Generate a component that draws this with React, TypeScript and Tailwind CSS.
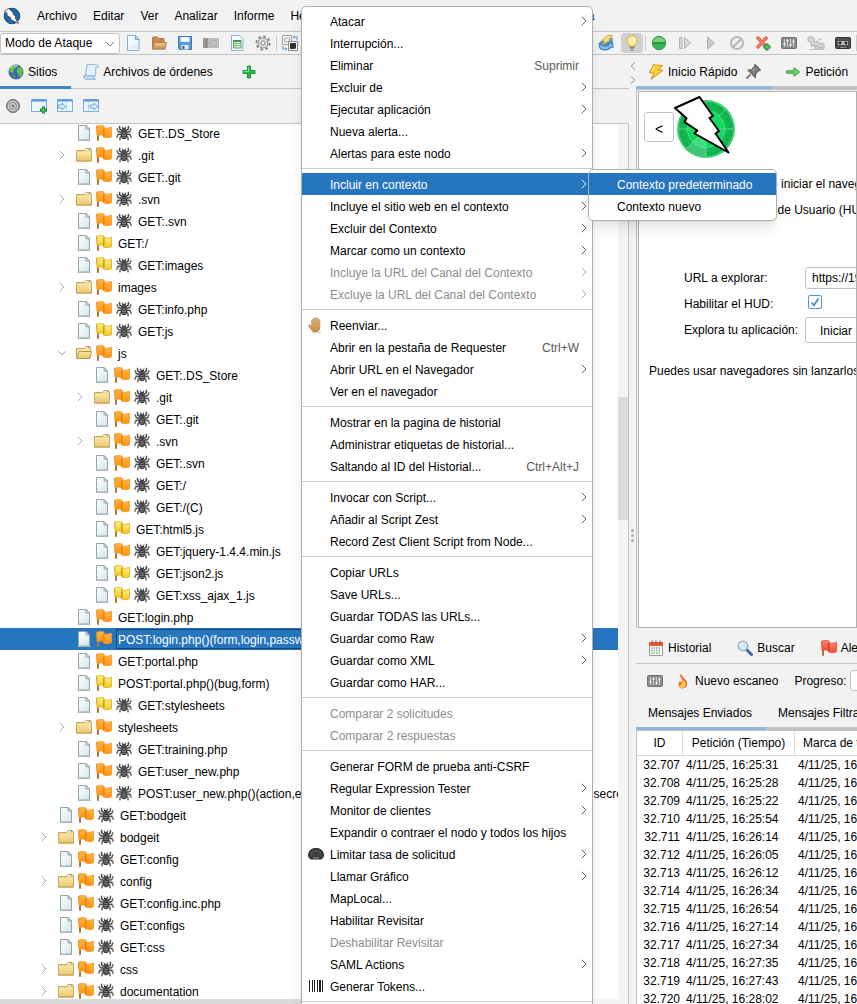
import type { ReactNode } from "react";
import { ChevronDown, ChevronLeft, ChevronRight } from "lucide-react";

const Icon = ({ children, w = 16, h = 16 }: { children: ReactNode; w?: number; h?: number }) => (
  <svg width={w} height={h} viewBox={`0 0 ${w} ${h}`} className="shrink-0" fill="none" aria-hidden="true">
    {children}
  </svg>
);

const Gradients = () => (
  <svg width="0" height="0" className="absolute" aria-hidden="true">
    <defs>
      <linearGradient id="paper" x1="0" y1="0" x2="1" y2="1">
        <stop offset="0" stopColor="#ffffff" />
        <stop offset="1" stopColor="#d3e6ea" />
      </linearGradient>
      <linearGradient id="gold" x1="0" y1="0" x2="0" y2="1">
        <stop offset="0" stopColor="#fbe7a8" />
        <stop offset="1" stopColor="#e6c46e" />
      </linearGradient>
      <linearGradient id="orange" x1="0" y1="0" x2="0" y2="1">
        <stop offset="0" stopColor="#ffb347" />
        <stop offset="1" stopColor="#ff9410" />
      </linearGradient>
      <linearGradient id="yellow" x1="0" y1="0" x2="0" y2="1">
        <stop offset="0" stopColor="#fff08a" />
        <stop offset="1" stopColor="#f2c81e" />
      </linearGradient>
      <linearGradient id="red" x1="0" y1="0" x2="0" y2="1">
        <stop offset="0" stopColor="#ff8570" />
        <stop offset="1" stopColor="#ee4f38" />
      </linearGradient>
      <linearGradient id="wood" x1="0" y1="0" x2="0" y2="1">
        <stop offset="0" stopColor="#f2cb97" />
        <stop offset="1" stopColor="#cc8b45" />
      </linearGradient>
      <radialGradient id="radar">
        <stop offset="0" stopColor="#0ee763" />
        <stop offset="0.65" stopColor="#0fd95d" />
        <stop offset="0.7" stopColor="#12bd54" />
        <stop offset="1" stopColor="#13ad4e" />
      </radialGradient>
    </defs>
  </svg>
);

const PageIcon = () => (
  <Icon>
    <path d="M1.500 15.500h13" stroke="#c3ccce" />
    <path d="M2.500.5h7.500l3.500 3.500v11h-11z" fill="url(#paper)" stroke="#8ea6ac" />
    <path d="M10 .5V4h3.500z" fill="#dfeaec" stroke="#7f979e" strokeWidth=".8" />
  </Icon>
);

const FolderIcon = () => (
  <Icon>
    <path d="M.5 3.500h8l1.500-2h4.500l1 1.500v11h-15z" fill="#f3d98d" stroke="#c9a55a" />
    <path d="M10.500 2.700h3.500" stroke="#fff" />
    <path d="M12.500 2.700h1.500" stroke="#3aa0dd" />
    <path d="M1 5h14v9H1z" fill="url(#gold)" />
    <path d="M.5 14h15" stroke="#bf9748" />
  </Icon>
);

const OpenFolderIcon = () => (
  <Icon>
    <path d="M.5 3.500h8l1.500-2h4l.5 1.500v9H.5z" fill="#f8e3a4" stroke="#c9a55a" />
    <path d="M12 2.700h1.500" stroke="#3aa0dd" />
    <path d="M3 6.500h12.500l-1.500 7H.7z" fill="url(#gold)" stroke="#bf9748" />
  </Icon>
);

const flags = {
  orange: { fill: "url(#orange)", edge: "#f7961c", fold: "#e57a06" },
  yellow: { fill: "url(#yellow)", edge: "#d9ae14", fold: "#c09508" },
  red: { fill: "url(#red)", edge: "#e2503b", fold: "#b93222" },
};

type FlagColor = keyof typeof flags;

const FlagIcon = ({ color }: { color: FlagColor }) => (
  <Icon>
    <path d="M1 1.500l1 8v6.300" stroke="#b0753c" strokeWidth="2" />
    <path d="M.8 1q4-1.200 7.200 0v9.500q-3.500-1.200-7 0z" fill={flags[color].fill} stroke={flags[color].edge} strokeWidth=".8" />
    <path d="M7.500 3q4 1 8-.8v9.600q-4 1.800-8 .2z" fill={flags[color].fill} stroke={flags[color].edge} strokeWidth=".8" />
    <path d="M7.300 3.500L8.500 2v8.500L7.300 12z" fill={flags[color].fold} />
  </Icon>
);

const SpiderIcon = () => (
  <Icon>
    <g stroke="#6f6f6f" strokeWidth="1.600">
      <path d="M6 5.500L3.700 4 3.500.8M10 5.500L12.300 4l.2-3.200" />
      <path d="M6 7L2.200 6.500.9 3.200M10 7l3.800-.5 1.300-3.300" />
      <path d="M6 9l-4 .3-1.300 3.400M10 9l4 .3 1.300 3.400" />
      <path d="M6 10.500l-1.800 1.700-.4 3.200M10 10.500l1.800 1.700.4 3.200" />
    </g>
    <g stroke="#333" strokeWidth=".7">
      <path d="M6 5.500L3.700 4 3.500 1.500M10 5.500L12.300 4l.2-2.500" />
      <path d="M6 7.500l-4-.8M10 7.500l4-.8M6 9.500l-4 .3M10 9.500l4 .3" />
    </g>
    <path d="M6.500 4L6.200 1.500M9.500 4l.3-2.500" stroke="#555" />
    <ellipse cx="8" cy="4.800" rx="2.300" ry="2.200" fill="#4a4a4a" />
    <ellipse cx="8" cy="10" rx="3.300" ry="4.200" fill="#444" />
    <path d="M6.500 8.500h3M6 10.500h4M6.700 12.300h2.600" stroke="#8b8b8b" strokeWidth=".8" />
  </Icon>
);

const GlobeIcon = () => (
  <Icon>
    <circle cx="8" cy="8" r="7" fill="#3f63bb" stroke="#35509a" />
    <path d="M2 4q3-3.500 7-2.800L8 4 5.500 5.500 6 8 3.500 9 1.500 7zM10 3.500l3-.5 2 4-1.500 5-2.500 1-1-3.500L8.500 8z" fill="#62c043" />
    <path d="M4.500 10.500l3 .8-.5 3-2-1z" fill="#4aa834" />
    <path d="M3 4q3-3 7-2" stroke="#d5f1bd" strokeWidth=".8" />
  </Icon>
);

const ScriptIcon = () => (
  <Icon>
    <path d="M4 .7h9.500q2 0 2 2.500h-2.800v8.600H2.500z" fill="#eef6fd" stroke="#7fb0de" />
    <path d="M.5 12h10q0 2.500 2 3.200H3Q.8 15 .5 12z" fill="#cfe4f6" stroke="#7fb0de" />
    <path d="M5 4h5.500M4.700 6.500h5.500M4.400 9h5.500" stroke="#d5e6f5" />
  </Icon>
);

const PlusIcon = () => (
  <Icon>
    <path d="M6.500 2h3v4.500H14v3H9.500V14h-3V9.500H2v-3h4.500z" fill="#2db54a" stroke="#1c9438" />
    <path d="M7.500 3v4.500H3" stroke="#7fda8d" />
  </Icon>
);

const NewFileIcon = () => (
  <Icon>
    <path d="M2.500.5h8l3.500 4v11H2.500z" fill="#f2f9ff" stroke="#7fb0da" />
    <path d="M10.500.5v4H14z" fill="#cfe5f7" stroke="#6ba5d6" />
    <path d="M4 13l8.500-5v6H4z" fill="#dcedfb" />
  </Icon>
);

const OpenIcon = () => (
  <Icon>
    <path d="M1.500 13V3q0-1 1-1h4l1.500 1.500h5V8" fill="#c98a48" stroke="#ad7a45" />
    <path d="M3.500 7.500h12l-1.500 6.700H1.200z" fill="url(#wood)" stroke="#b78350" />
  </Icon>
);

const SaveIcon = () => (
  <Icon>
    <path d="M1.500 1.500h13v13h-12l-1-1z" fill="#5b9bd5" stroke="#3a7ab6" />
    <path d="M3.500 2h9v5h-9z" fill="#f2f8fd" />
    <path d="M4.500 10h7v4.500h-7z" fill="#e4eaf0" />
    <path d="M5.500 11h2v3h-2z" fill="#2e5e8f" />
  </Icon>
);

const CameraIcon = () => (
  <Icon>
    <path d="M0 3h16v10H0z" fill="#bcbcbc" />
    <path d="M0 3h5v10H0z" fill="#979797" />
    <path d="M2 5h2M2 7h2M2 9h2M2 11h2" stroke="#808080" />
    <circle cx="10.500" cy="8" r="2.800" fill="#d3d3d3" stroke="#a4a4a4" />
    <circle cx="10.500" cy="8" r="1" fill="#a4a4a4" />
  </Icon>
);

const SheetIcon = () => (
  <Icon>
    <path d="M2.500.5h8l3.500 3.500v11.500H2.500z" fill="#f4faff" stroke="#8bb4d4" />
    <path d="M4.500 5.500h7.500v7.500H4.500z" fill="#e6f6e4" stroke="#4aa850" />
    <path d="M4.500 6h7.500" stroke="#2f8f38" strokeWidth="1.600" />
    <path d="M4.500 8.500h7.500M4.500 10.500h7.500M7 6v7" stroke="#5cb061" strokeWidth=".7" />
  </Icon>
);

const GearIcon = () => (
  <Icon>
    <circle cx="8" cy="8" r="6.600" stroke="#868686" strokeWidth="2" strokeDasharray="2.600 2.580" />
    <circle cx="8" cy="8" r="5" fill="#e3e3e3" stroke="#868686" />
    <circle cx="8" cy="8" r="2.200" fill="#f2f2f2" stroke="#808080" />
  </Icon>
);

const SwapIcon = () => (
  <Icon>
    <path d="M.5.5h9v9h-9z" fill="#fff" stroke="#999" />
    <path d="M2.500 3h5v4h-5z" fill="#eee" stroke="#aaa" />
    <path d="M6.500 6.500h9v9h-9z" fill="#fff" stroke="#888" />
    <path d="M8 8h6v5l-1 1H8z" fill="#333" />
    <path d="M11 2h4v3M11 2l1.500-1.500M11 2l1.500 1.500M1 11v3h4M5 14l-1.500-1.500M5 14l-1.500 1.500" stroke="#5d86dc" />
  </Icon>
);

const RefreshBoltIcon = () => (
  <Icon>
    <path d="M1 8v5q3 3 7 2.500 6-1 7-6L14.500 3 9 1z" fill="#4d90d4" />
    <path d="M1 8l2 2q4 2.500 8 0l-1.500-1.500H15V13l-1.500-1.200Q9 16 4 14.500L1 12z" fill="#86baec" stroke="#2a69ab" strokeWidth=".7" />
    <path d="M9 .5h5.500l-3.500 4h2.500L4 10l2.500-4H3.500z" fill="#fcdf74" stroke="#c59c30" strokeWidth=".8" />
  </Icon>
);

const BulbIcon = () => (
  <Icon>
    <path d="M8 .7a4.800 4.800 0 0 1 2.500 9v1.500h-5V9.700A4.800 4.800 0 0 1 8 .7z" fill="#ffef9c" stroke="#e2ac30" />
    <path d="M8 2.500a2.500 2.500 0 0 1 2 4" stroke="#fff" strokeWidth="1.500" />
    <path d="M5.500 12.300h5M6 14h4M7 15.500h2" stroke="#7c7c7c" strokeWidth="1.200" />
  </Icon>
);

const GreenBallIcon = () => (
  <Icon>
    <circle cx="8" cy="8" r="6.700" fill="#38b54e" stroke="#2c9a40" />
    <path d="M2 7a6.200 6.200 0 0 1 12 0z" fill="#79cf80" />
    <path d="M1.500 8h13" stroke="#1c8031" />
  </Icon>
);

const StepIcon = () => (
  <Icon>
    <path d="M2.500 2.500H5v11H2.500zM7.500 2.500L13.500 8l-6 5.500z" fill="#d8d8d8" stroke="#b2b2b2" />
  </Icon>
);

const PlayIcon = () => (
  <Icon>
    <path d="M4.500 2L11.500 8l-7 6z" fill="#cccccc" stroke="#ababab" />
  </Icon>
);

const BanIcon = () => (
  <Icon>
    <circle cx="8" cy="8" r="6" stroke="#b8b8b8" strokeWidth="2" />
    <path d="M4 12l8-8" stroke="#b8b8b8" strokeWidth="2" />
  </Icon>
);

const CrossPlusIcon = () => (
  <Icon>
    <path d="M2 2l10 11M12 2L2 13" stroke="#d5442c" strokeWidth="3.200" />
    <path d="M2 2l10 11M12 2L2 13" stroke="#f88770" strokeWidth="1.600" />
    <path d="M12 8.500v7M8.500 12h7" stroke="#178a32" strokeWidth="3" />
    <path d="M12 9.500v5M9.500 12h5" stroke="#6ddb79" />
  </Icon>
);

const SlidersIcon = () => (
  <Icon>
    <rect x=".5" y="2.500" width="15" height="11" rx="1" fill="#8a8a8a" stroke="#707070" />
    <path d="M3.500 4v8M6.500 4v8M9.500 4v8M12.500 4v8" stroke="#cfcfcf" />
    <path d="M2.500 9h2M5.500 6h2M8.500 10h2M11.500 6.500h2" stroke="#fff" strokeWidth="1.500" />
  </Icon>
);

const BrokenPlugIcon = () => (
  <Icon w={18}>
    <path d="M1 2.500l3-1 3 1.500v3l6 2 4 1v5H8v-3H4V7L1 6z" fill="#d3d3d3" stroke="#b4b4b4" />
    <path d="M10 5.500l5-2M6 10.500h5M11 12.500h5" stroke="#b4b4b4" />
    <path d="M2 14.500h15" stroke="#c4c4c4" />
  </Icon>
);

const TapeIcon = () => (
  <Icon>
    <rect x=".5" y="2.500" width="15" height="11" rx="1" fill="#4d4d4d" stroke="#333" />
    <rect x="3" y="6" width="10" height="4" fill="#b8b8b8" />
    <circle cx="5" cy="8" r="1.400" fill="#222" />
    <circle cx="11" cy="8" r="1.400" fill="#222" />
    <path d="M5 12.500h6" stroke="#888" />
  </Icon>
);

const TargetIcon = () => (
  <Icon>
    <circle cx="8" cy="8" r="6.500" fill="#9a9a9a" stroke="#6c6c6c" />
    <circle cx="8" cy="8" r="4.700" stroke="#dcdcdc" />
    <circle cx="8" cy="8" r="2.300" fill="#888" stroke="#e6e6e6" />
  </Icon>
);

const WindowIcon = ({ kind }: { kind: "add" | "in" | "out" }) => (
  <Icon>
    <path d="M.5 1.500h15v12H.5z" fill="#eef6fd" stroke="#78aee0" />
    <path d="M.5 2.500h15" stroke="#5598dc" strokeWidth="2" />
    {kind === "add" && (
      <>
        <path d="M12.500 8.500v7M9 12h7" stroke="#178a32" strokeWidth="3" />
        <path d="M12.500 9.500v5M10 12h5" stroke="#62d572" />
      </>
    )}
    {kind === "in" && (
      <>
        <path d="M9.500 4v9" stroke="#b5d2ee" />
        <path d="M1 7h4V5l4 3.500L5 12v-2H1z" fill="#dcecfa" stroke="#5290cd" strokeWidth=".8" />
      </>
    )}
    {kind === "out" && (
      <>
        <path d="M5.500 4v9" stroke="#b5d2ee" />
        <path d="M7 7h4V5l4 3.500-4 3.500v-2H7z" fill="#dcecfa" stroke="#5290cd" strokeWidth=".8" />
      </>
    )}
  </Icon>
);

const BoltIcon = () => (
  <Icon>
    <path d="M5.500.8L14.500 1.500 10 5.800l5 .5L3 15.300l3-6L1.500 8.500z" fill="#ffce3d" stroke="#d39312" />
    <path d="M6.500 2L3.500 8" stroke="#fff1b5" />
  </Icon>
);

const PinIcon = () => (
  <Icon>
    <path d="M10 .8L15.200 6l-2 .8-2.600 2.700-.4 3.500L3.500 6.200 7 5.800 9.400 3z" fill="#808080" stroke="#666" strokeWidth="1.500" />
    <path d="M5.500 10.500l-4 4" stroke="#777" strokeWidth="2" />
    <path d="M9.500 4.500L7.500 7" stroke="#ccc" />
  </Icon>
);

const ArrowIcon = () => (
  <Icon>
    <path d="M1.500 6.800h7.500V3.800l5.500 4.200-5.500 4.200V9.200H1.500z" fill="#6bd869" stroke="#2f9c39" />
  </Icon>
);

const CalendarIcon = () => (
  <Icon>
    <path d="M1.500 2.500h13v13h-13z" fill="#fff" stroke="#9a9a9a" />
    <path d="M1 2h14v4H1z" fill="#e4553c" />
    <path d="M4 .5v3M8 .5v3M12 .5v3" stroke="#666" />
    <path d="M3 8h10M3 10.500h10M3 13h10" stroke="#7ab583" strokeWidth="1.500" strokeDasharray="1.500 1" />
  </Icon>
);

const SearchIcon = () => (
  <Icon>
    <path d="M9.500 9.500l5 5" stroke="#3a6bb0" strokeWidth="3" strokeLinecap="round" />
    <circle cx="6" cy="6" r="4.800" fill="#cfe8fa" stroke="#9aaab6" strokeWidth="1.300" />
    <path d="M3.500 6A2.500 2.500 0 0 1 6 3.500" stroke="#fff" strokeWidth="1.200" />
  </Icon>
);

const FlameIcon = () => (
  <Icon>
    <path d="M6 .5q.5 3 3.500 5.200Q13 9 11.800 12.500 10.500 15.500 7.500 15.500 4 15.300 3.500 11.500q0-2 1.500-3.500.5 1.500 1.500 1.500Q8 6 5 3z" fill="#f0641f" />
    <path d="M8 6q3 3 2.600 6-.8 3-3.400 3-2.700-.2-2.700-2.700Q7.500 12 8 6z" fill="#ffcc4a" />
  </Icon>
);

const HandIcon = () => (
  <Icon>
    <path d="M4 15.500h9" stroke="#ccc" />
    <path d="M5 14.500Q1.500 11 .8 8q1.500-.8 3 1.500V3q1-1.200 2 0V1.500q1-1.300 2 0V1q1-1 2 .3V3q1-1.200 2 0v7q0 3-2 4.500z" fill="url(#wood)" stroke="#b5824c" strokeWidth=".8" />
    <path d="M5.800 3v5M7.800 2v6M9.900 3v5M5 11q3-2 5-.5" stroke="#b5824c" strokeWidth=".7" />
  </Icon>
);

const GaugeIcon = () => (
  <Icon>
    <path d="M.5 9Q1 2.500 8 2.500T15.500 9q0 2.500-2 4h-11Q.5 11.500.5 9z" fill="#3d3d3d" stroke="#222" />
    <path d="M3 9q.5-4 5-4t5 4" stroke="#888" strokeDasharray="1 1.300" />
    <path d="M5 12h6" stroke="#999" />
  </Icon>
);

const BarcodeIcon = () => (
  <Icon>
    <path d="M1.500 2v12M4.500 2v12M6.500 2v12M9.500 2v12M14.500 2v12" stroke="#222" />
    <path d="M12 2v12" stroke="#222" strokeWidth="2" />
  </Icon>
);

const AppLogo = () => (
  <Icon w={18} h={18}>
    <circle cx="9" cy="9" r="7.800" fill="#2467a6" stroke="#174b7d" />
    <path d="M1.500 4L5.500 1.500l5 4.500-.8.800 3.300 3-1 .8 3.500 6L7 12l1-1-4.500-3 1-1z" fill="#fff" stroke="#27313b" strokeWidth=".7" />
  </Icon>
);

const RadarLogo = () => (
  <Icon w={62} h={62}>
    <circle cx="32" cy="33" r="29" fill="#3fce74" />
    <circle cx="32" cy="33" r="27" fill="url(#radar)" />
    <circle cx="32" cy="33" r="18.500" stroke="#4fe38b" />
    <path d="M32 5v56M4 33h56M12.500 52.500L32 33M51.500 13.500L32 33M51.500 52.500L32 33" stroke="#48dd83" />
    <path d="M32 33L13 52q8 8 19 8z" fill="#98e7b8" opacity=".35" />
    <path d="M1 12L25.500 1 39 20l-3.500 2L45 35l-3.500 2.500L54.500 56.500 20.500 37.500l2.800-3L10.500 26l2-3.800z" fill="#fff" stroke="#000" strokeWidth="2" strokeLinejoin="round" />
  </Icon>
);

const menuBar = ["Archivo", "Editar", "Ver", "Analizar", "Informe", "Herramientas", "Importar", "Exportar", "En línea", "Ayuda"];

const ToolButton = ({ label, children, active, wide }: { label: string; children: ReactNode; active?: boolean; wide?: boolean }) => (
  <button aria-label={label} className={`flex h-[21px] items-center justify-center ${wide ? "w-7" : "w-[26px]"}`}>
    <span className={`flex h-5 items-center justify-center rounded-sm ${active ? "w-[22px] bg-[#d0d0d0]" : ""}`}>{children}</span>
  </button>
);

const Divider = () => <span className="h-4 w-px bg-[#cdcdcd]" />;

const TopToolbar = () => (
  <div className="flex h-[23px] shrink-0 items-center border-b border-[#c2c2c2]">
    <div className="relative">
      <select
        aria-label="Modo"
        className="block h-[21px] w-[120px] appearance-none rounded-[3px] border border-[#c2c2c2] bg-white pl-1"
        defaultValue="Modo de Ataque"
      >
        <option>Modo de Ataque</option>
        <option>Modo Seguro</option>
      </select>
      <ChevronDown className="pointer-events-none absolute top-[3px] right-0.5 size-4 text-[#777]" strokeWidth={1.5} />
    </div>
    <ToolButton label="Nueva sesión"><NewFileIcon /></ToolButton>
    <ToolButton label="Abrir sesión"><OpenIcon /></ToolButton>
    <ToolButton label="Guardar sesión"><SaveIcon /></ToolButton>
    <ToolButton label="Instantánea"><CameraIcon /></ToolButton>
    <ToolButton label="Propiedades"><SheetIcon /></ToolButton>
    <ToolButton label="Opciones"><GearIcon /></ToolButton>
    <Divider />
    <ToolButton label="Mostrar pestañas"><SwapIcon /></ToolButton>
    <div className="flex-1" />
    <ToolButton label="Actualizar"><RefreshBoltIcon /></ToolButton>
    <ToolButton label="HUD" active><BulbIcon /></ToolButton>
    <Divider />
    <ToolButton label="Interrumpir"><GreenBallIcon /></ToolButton>
    <ToolButton label="Paso"><StepIcon /></ToolButton>
    <ToolButton label="Continuar"><PlayIcon /></ToolButton>
    <ToolButton label="Descartar"><BanIcon /></ToolButton>
    <ToolButton label="Agregar interrupción"><CrossPlusIcon /></ToolButton>
    <ToolButton label="Políticas"><SlidersIcon /></ToolButton>
    <ToolButton label="Proxy" wide><BrokenPlugIcon /></ToolButton>
    <ToolButton label="Grabar"><TapeIcon /></ToolButton>
    <Divider />
  </div>
);

type Row = { text: string; level?: 1 | 3; folder?: "open" | "closed"; flag?: FlagColor; plain?: boolean; selected?: boolean };

const rows: Row[] = [
  { text: "GET:.DS_Store" },
  { text: ".git", folder: "closed" },
  { text: "GET:.git" },
  { text: ".svn", folder: "closed" },
  { text: "GET:.svn" },
  { text: "GET:/", flag: "yellow", plain: true },
  { text: "GET:images", flag: "yellow" },
  { text: "images", folder: "closed", plain: true },
  { text: "GET:info.php" },
  { text: "GET:js", flag: "yellow" },
  { text: "js", folder: "open", plain: true },
  { text: "GET:.DS_Store", level: 3 },
  { text: ".git", level: 3, folder: "closed" },
  { text: "GET:.git", level: 3 },
  { text: ".svn", level: 3, folder: "closed" },
  { text: "GET:.svn", level: 3 },
  { text: "GET:/", level: 3 },
  { text: "GET:/(C)", level: 3 },
  { text: "GET:html5.js", level: 3, flag: "yellow", plain: true },
  { text: "GET:jquery-1.4.4.min.js", level: 3 },
  { text: "GET:json2.js", level: 3, flag: "yellow" },
  { text: "GET:xss_ajax_1.js", level: 3, flag: "yellow" },
  { text: "GET:login.php", plain: true },
  { text: "POST:login.php()(form,login,password,security_level)", plain: true, selected: true },
  { text: "GET:portal.php", plain: true },
  { text: "POST:portal.php()(bug,form)", flag: "yellow", plain: true },
  { text: "GET:stylesheets", flag: "yellow" },
  { text: "stylesheets", folder: "closed", plain: true },
  { text: "GET:training.php" },
  { text: "GET:user_new.php" },
  { text: "POST:user_new.php()(action,email,login,mail_activation,password,password_confirm,secret)" },
  { text: "GET:bodgeit", level: 1 },
  { text: "bodgeit", level: 1, folder: "closed" },
  { text: "GET:config", level: 1 },
  { text: "config", level: 1, folder: "closed" },
  { text: "GET:config.inc.php", level: 1 },
  { text: "GET:configs", level: 1 },
  { text: "GET:css", level: 1 },
  { text: "css", level: 1, folder: "closed" },
  { text: "documentation", level: 1, folder: "closed" },
];

const indent = { 1: "pl-[36px]", 2: "pl-[54px]", 3: "pl-[72px]" };

const TreeRow = ({ row }: { row: Row }) => (
  <li
    className={`flex h-[22px] items-center gap-1 whitespace-nowrap ${indent[row.level ?? 2]} ${
      row.selected ? "bg-[#2675bf] text-white" : ""
    }`}
  >
    <span className="mr-0.5 flex w-4 shrink-0 justify-center text-[#aaa]">
      {row.folder === "closed" && <ChevronRight className="size-4" strokeWidth={1.5} />}
      {row.folder === "open" && <ChevronDown className="size-4" strokeWidth={1.5} />}
    </span>
    {!row.folder && <PageIcon />}
    {row.folder === "closed" && <FolderIcon />}
    {row.folder === "open" && <OpenFolderIcon />}
    <FlagIcon color={row.flag ?? "orange"} />
    {!row.plain && <SpiderIcon />}
    <span className={`border px-px pt-0.5 leading-4 ${row.selected ? "border-[#174a7c]" : "border-transparent"}`}>{row.text}</span>
  </li>
);

const SitesPanel = () => (
  <section className="flex min-h-0 flex-col overflow-hidden">
    <div className="flex h-[34px] shrink-0 border-b border-[#c2c2c2]">
      <button className="-mb-px flex items-center gap-1 border-b-[3px] border-[#4083c9] pt-0.5 pr-3.5 pl-2"><GlobeIcon />Sitios</button>
      <button className="flex items-center gap-1 px-3"><ScriptIcon />Archivos de órdenes</button>
      <button aria-label="Agregar pestaña" className="flex items-center px-4"><PlusIcon /></button>
    </div>
    <div className="flex h-[34px] shrink-0 items-center">
      <ToolButton label="Solo en alcance"><TargetIcon /></ToolButton>
      <ToolButton label="Nuevo contexto"><WindowIcon kind="add" /></ToolButton>
      <ToolButton label="Importar contexto"><WindowIcon kind="in" /></ToolButton>
      <ToolButton label="Exportar contexto"><WindowIcon kind="out" /></ToolButton>
    </div>
    <div className="flex min-h-0 flex-1 border-t border-r border-[#c2c2c2]">
      <div className="flex min-w-0 flex-1 flex-col">
        <div className="min-h-0 flex-1 overflow-hidden bg-white">
          <ul className="-mt-0.5">
            {rows.map((row, i) => (
              <TreeRow key={i} row={row} />
            ))}
          </ul>
        </div>
        <div className="h-[5px] shrink-0 bg-[#f5f5f5]">
          <div className="h-full w-4/5 bg-[#dbdbdb]" />
        </div>
      </div>
      <div className="w-2.5 bg-[#f5f5f5] pt-[273px]">
        <div className="h-[123px] bg-[#dbdbdb]" />
      </div>
    </div>
  </section>
);

const Splitter = () => (
  <div className="flex flex-col items-center text-[#777]">
    <div className="flex flex-col pt-1">
      <ChevronLeft className="h-3.5 w-4" strokeWidth={1.5} />
      <ChevronRight className="h-3.5 w-4" strokeWidth={1.5} />
    </div>
    <div className="flex flex-1 flex-col items-center justify-center gap-0.5 pb-5">
      <span className="size-[3px] rounded-full bg-[#aaa]" />
      <span className="size-[3px] rounded-full bg-[#aaa]" />
      <span className="size-[3px] rounded-full bg-[#aaa]" />
    </div>
  </div>
);

const QuickStart = () => (
  <section className="flex h-[573px] shrink-0 flex-col">
    <div className="flex h-[34px] shrink-0 border-b-[3px] border-[#c2c2c2] whitespace-nowrap">
      <button className="-mb-[3px] flex items-center gap-1 border-b-[3px] border-[#90b8de] pt-0.5 pr-3 pl-3">
        <BoltIcon />
        Inicio Rápido
        <span className="ml-1"><PinIcon /></span>
      </button>
      <button className="flex items-center gap-1 px-3 pt-0.5"><ArrowIcon />Petición</button>
    </div>
    <div className="min-h-0 flex-1 border-t border-l border-[#c2c2c2] pt-px pl-px">
      <div className="h-full overflow-hidden border border-[#b0b0b0] bg-white pt-1 pl-[5px] whitespace-nowrap">
        <div className="flex items-center">
          <button className="h-[30px] w-[30px] rounded-[3px] border border-[#c2c2c2] bg-white pt-1 text-sm">&lt;</button>
          <RadarLogo />
        </div>
        <div className="pl-[5px] leading-[26px]">
          <p className="mt-[13px]">Esta pantalla, le permite iniciar el navegador que elija</p>
          <p>Interfaz Frontal del Test de Usuario (HUD)</p>
          <div className="mt-[42px] grid grid-cols-[121px_1fr] pl-[35px]">
            <label htmlFor="url">URL a explorar:</label>
            <div className="flex items-center">
              <input id="url" defaultValue="https://192.168.1.10" className="h-[22px] w-64 rounded-[3px] border border-[#c2c2c2] bg-white px-1.5" />
            </div>
            <label htmlFor="hud">Habilitar el HUD:</label>
            <div className="relative flex items-center pb-1 pl-[3px]">
              <input id="hud" type="checkbox" defaultChecked className="peer size-3.5 appearance-none rounded-xs border border-[#4d94d8] bg-white" />
              <svg width="14" height="14" viewBox="0 0 14 14" className="pointer-events-none absolute hidden peer-checked:block" fill="none">
                <path d="M3.500 7.500l2.500 2.800L10.500 3.500" stroke="#3e8fdb" strokeWidth="1.800" />
              </svg>
            </div>
            <span>Explora tu aplicación:</span>
            <div className="flex">
              <button className="h-[26px] rounded-[3px] border border-[#c2c2c2] bg-white px-3.5">Iniciar Navegador</button>
            </div>
          </div>
          <p className="mt-[15px]">Puedes usar navegadores sin lanzarlos desde aquí</p>
        </div>
      </div>
    </div>
  </section>
);

const messages = [
  ["32.707", "16:25:31"], ["32.708", "16:25:28"], ["32.709", "16:25:22"], ["32.710", "16:25:54"],
  ["32.711", "16:26:14"], ["32.712", "16:26:05"], ["32.713", "16:26:12"], ["32.714", "16:26:34"],
  ["32.715", "16:26:54"], ["32.716", "16:27:14"], ["32.717", "16:27:34"], ["32.718", "16:27:35"],
  ["32.719", "16:27:43"], ["32.720", "16:28:02"],
];

const History = () => (
  <section className="flex min-h-0 flex-1 flex-col overflow-hidden whitespace-nowrap">
    <div className="flex h-9 shrink-0 items-center gap-[26px] border-b border-[#c2c2c2] pt-1 pl-3">
      <button className="flex items-center gap-1"><CalendarIcon />Historial</button>
      <button className="flex items-center gap-1"><SearchIcon />Buscar</button>
      <button className="flex items-center gap-1"><FlagIcon color="red" />Alertas</button>
    </div>
    <div className="flex h-[33px] shrink-0 items-center">
      <button aria-label="Políticas de escaneo" className="ml-[11px]"><SlidersIcon /></button>
      <button className="ml-3 flex items-center gap-1"><FlameIcon />Nuevo escaneo</button>
      <label htmlFor="progress" className="ml-4">Progreso:</label>
      <select id="progress" className="ml-1 h-[21px] w-40 shrink-0 appearance-none rounded-[3px] border border-[#c2c2c2] bg-white" />
    </div>
    <div className="flex h-[33px] shrink-0 border-b-[3px] border-[#c2c2c2]">
      <button className="-mb-[3px] shrink-0 border-b-[3px] border-[#90b8de] px-3.5 pt-0.5 pl-3">Mensajes Enviados</button>
      <button className="shrink-0 px-3 pt-0.5">Mensajes Filtrados</button>
    </div>
    <div className="flex-1 overflow-hidden border-t border-l border-[#c2c2c2] bg-white">
      <table className="w-[300px] table-fixed border-separate border-spacing-0">
        <thead>
          <tr className="h-[25px]">
            <th className="w-[46px] border-r border-b border-[#dcdcdc] p-0 font-normal">ID</th>
            <th className="w-[112px] border-r border-b border-[#dcdcdc] p-0 font-normal">Petición (Tiempo)</th>
            <th className="border-b border-[#dcdcdc] p-0 pl-2 text-left font-normal">Marca de tiempo</th>
          </tr>
        </thead>
        <tbody>
          {messages.map(([id, time]) => (
            <tr key={id} className="h-[18px] leading-[18px]">
              <td className="p-0 pr-[3px] text-right">{id}</td>
              <td className="p-0 pl-[3px]">4/11/25, {time}</td>
              <td className="p-0 pl-[3px]">4/11/25, {time}</td>
            </tr>
          ))}
        </tbody>
      </table>
    </div>
  </section>
);

type Item = { text: string; sub?: boolean; keys?: string; icon?: ReactNode; disabled?: boolean; active?: boolean };

const menuGroups: Item[][] = [
  [
    { text: "Atacar", sub: true },
    { text: "Interrupción..." },
    { text: "Eliminar", keys: "Suprimir" },
    { text: "Excluir de", sub: true },
    { text: "Ejecutar aplicación", sub: true },
    { text: "Nueva alerta..." },
    { text: "Alertas para este nodo", sub: true },
  ],
  [
    { text: "Incluir en contexto", sub: true, active: true },
    { text: "Incluye el sitio web en el contexto", sub: true },
    { text: "Excluir del Contexto", sub: true },
    { text: "Marcar como un contexto", sub: true },
    { text: "Incluye la URL del Canal del Contexto", sub: true, disabled: true },
    { text: "Excluye la URL del Canal del Contexto", sub: true, disabled: true },
  ],
  [
    { text: "Reenviar...", icon: <HandIcon /> },
    { text: "Abrir en la pestaña de Requester", keys: "Ctrl+W" },
    { text: "Abrir URL en el Navegador", sub: true },
    { text: "Ver en el navegador" },
  ],
  [
    { text: "Mostrar en la pagina de historial" },
    { text: "Administrar etiquetas de historial..." },
    { text: "Saltando al ID del Historial...", keys: "Ctrl+Alt+J" },
  ],
  [
    { text: "Invocar con Script...", sub: true },
    { text: "Añadir al Script Zest", sub: true },
    { text: "Record Zest Client Script from Node..." },
  ],
  [
    { text: "Copiar URLs" },
    { text: "Save URLs..." },
    { text: "Guardar TODAS las URLs..." },
    { text: "Guardar como Raw", sub: true },
    { text: "Guardar como XML", sub: true },
    { text: "Guardar como HAR..." },
  ],
  [
    { text: "Comparar 2 solicitudes", disabled: true },
    { text: "Comparar 2 respuestas", disabled: true },
  ],
  [
    { text: "Generar FORM de prueba anti-CSRF" },
    { text: "Regular Expression Tester", sub: true },
    { text: "Monitor de clientes", sub: true },
    { text: "Expandir o contraer el nodo y todos los hijos" },
    { text: "Limitar tasa de solicitud", sub: true, icon: <GaugeIcon /> },
    { text: "Llamar Gráfico", sub: true },
    { text: "MapLocal..." },
    { text: "Habilitar Revisitar" },
    { text: "Deshabilitar Revisitar", disabled: true },
    { text: "SAML Actions", sub: true },
    { text: "Generar Tokens...", icon: <BarcodeIcon /> },
  ],
  [{ text: "Eliminar sitio" }],
];

const MenuItem = ({ item }: { item: Item }) => (
  <button
    role="menuitem"
    disabled={item.disabled}
    className={`flex h-[22px] w-full items-center gap-1.5 pl-1.5 text-left whitespace-nowrap ${
      item.active ? "bg-[#2675bf] text-white" : item.disabled ? "text-[#8c8c8c]" : ""
    }`}
  >
    <span className="w-4 shrink-0">{item.icon}</span>
    <span className="flex-1 pt-0.5">{item.text}</span>
    {item.keys && <span className="pt-0.5 pr-[13px] text-[#595959]">{item.keys}</span>}
    {item.sub && (
      <ChevronRight
        className={`size-4 shrink-0 ${item.active ? "text-white" : item.disabled ? "text-[#aaa]" : "text-[#666]"}`}
        strokeWidth={1.5}
      />
    )}
  </button>
);

const ContextMenu = () => (
  <div role="menu" className="absolute top-1.5 left-[301px] w-[292px] rounded-[5px] border border-[#aeaeae] bg-white py-[3px] shadow-lg">
    {menuGroups.map((group, i) => (
      <div key={i} className={i > 0 ? "mt-1 border-t border-[#c9c9c9] pt-1" : ""}>
        {group.map((item) => (
          <MenuItem key={item.text} item={item} />
        ))}
      </div>
    ))}
    <div role="menu" className="absolute top-[162px] left-[286px] w-[189px] rounded-[5px] border border-[#aeaeae] bg-white py-[3px] shadow-lg">
      <MenuItem item={{ text: "Contexto predeterminado", active: true }} />
      <MenuItem item={{ text: "Contexto nuevo" }} />
    </div>
  </div>
);

const App = () => {
  return (
    <div className="relative flex h-screen flex-col overflow-hidden bg-[#f2f2f2] font-['Liberation_Sans',Arial,sans-serif] text-xs text-black">
      <Gradients />
      <nav className="flex h-8 shrink-0 items-center gap-4 border-b border-[#c2c2c2] pl-[3px] whitespace-nowrap">
        <AppLogo />
        {menuBar.map((name) => (
          <button key={name}>{name}</button>
        ))}
      </nav>
      <TopToolbar />
      <main className="grid min-h-0 flex-1 grid-cols-[minmax(0,629fr)_7px_minmax(0,221fr)] grid-rows-[minmax(0,1fr)]">
        <SitesPanel />
        <Splitter />
        <div className="flex min-h-0 flex-col overflow-hidden">
          <QuickStart />
          <History />
        </div>
      </main>
      <ContextMenu />
    </div>
  );
};

export default App;
